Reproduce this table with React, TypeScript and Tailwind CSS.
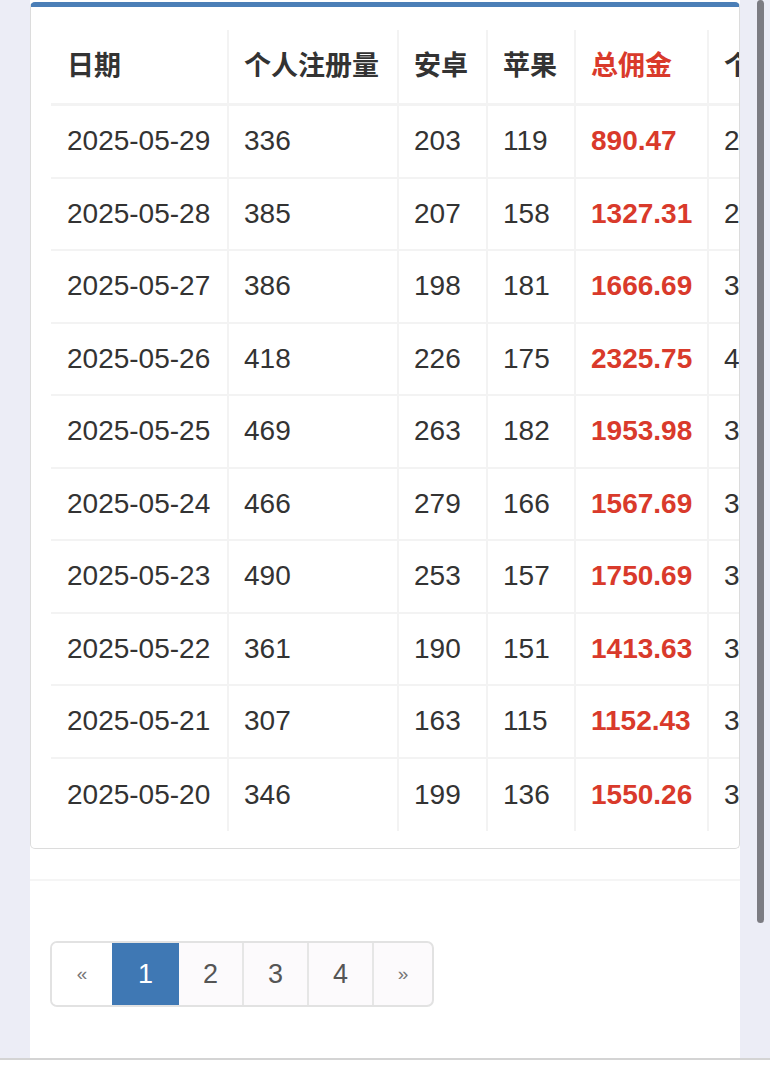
import React from 'react';

const rows = [
  ['2025-05-29', '336', '203', '119', '890.47', '247.30'],
  ['2025-05-28', '385', '207', '158', '1327.31', '286.12'],
  ['2025-05-27', '386', '198', '181', '1666.69', '312.45'],
  ['2025-05-26', '418', '226', '175', '2325.75', '408.60'],
  ['2025-05-25', '469', '263', '182', '1953.98', '351.20'],
  ['2025-05-24', '466', '279', '166', '1567.69', '339.75'],
  ['2025-05-23', '490', '253', '157', '1750.69', '362.10'],
  ['2025-05-22', '361', '190', '151', '1413.63', '318.44'],
  ['2025-05-21', '307', '163', '115', '1152.43', '301.92'],
  ['2025-05-20', '346', '199', '136', '1550.26', '334.08'],
];

const widths = ['w-[176px]', 'w-[170px]', 'w-[89px]', 'w-[88px]', 'w-[133px]', 'w-[140px]'];
const heads = ['日期', '个人注册量', '安卓', '苹果', '总佣金', '个人佣金'];

function Cell({ i, children, red, head }: { i: number; children: React.ReactNode; red?: boolean; head?: boolean }) {
  return (
    <div
      className={`${widths[i]} shrink-0 h-full flex items-center whitespace-nowrap ${
        i === 0 ? 'pl-[16px]' : 'pl-[15px] border-l-2 border-[#f3f3f3]'
      } ${red ? 'text-[#d93a2b] font-bold' : 'text-[#333]'} ${head ? 'font-semibold text-[27px]' : 'text-[28px]'}`}
    >
      {children}
    </div>
  );
}

export default function App() {
  return (
    <div
      className="w-[770px] h-[1080px] bg-[#ecedf6] flex flex-col overflow-hidden"
      style={{ fontFamily: '"Liberation Sans", "Noto Sans CJK SC", sans-serif' }}
    >
      <div className="flex flex-1 min-h-0">
        <div className="w-[30px] shrink-0" />
        <div className="w-[710px] shrink-0 bg-white flex flex-col">
          <div className="mt-[2px] rounded-[5px] border border-[#dcdcdc] border-t-[5px] border-t-[#4b7fb7] pl-[20px] pt-[23px] pb-[17px] overflow-hidden">
            <div className="overflow-hidden">
              <div className="flex h-[76px] border-b-[3px] border-[#f3f3f3] w-max">
                {heads.map((h, i) => (
                  <Cell key={h} i={i} head red={i === 4}>
                    {h}
                  </Cell>
                ))}
              </div>
              {rows.map((r, ri) => (
                <div
                  key={r[0]}
                  className={`flex w-max h-[72.5px] ${ri < rows.length - 1 ? 'border-b-2 border-[#f3f3f3]' : ''}`}
                >
                  {r.map((v, i) => (
                    <Cell key={i} i={i} red={i === 4}>
                      {v}
                    </Cell>
                  ))}
                </div>
              ))}
            </div>
          </div>
          <div className="h-[30px]" />
          <div className="border-t-2 border-[#f5f5f5] pt-[60px] pl-[20px]">
            <div className="inline-flex h-[66px] border-2 border-[#e2e2e2] rounded-[7px] overflow-hidden bg-[#fcfafc] text-[#555]">
              <div className="w-[60px] flex items-center justify-center text-[19px] text-[#777] bg-white">«</div>
              <div className="w-[67px] flex items-center justify-center text-[27px] bg-[#3f78b4] text-white">1</div>
              <div className="w-[63px] flex items-center justify-center text-[27px]">2</div>
              <div className="w-[65px] flex items-center justify-center text-[27px] border-l-2 border-[#e6e6e6]">3</div>
              <div className="w-[65px] flex items-center justify-center text-[27px] border-l-2 border-[#e6e6e6]">4</div>
              <div className="w-[60px] flex items-center justify-center text-[19px] text-[#777] border-l-2 border-[#e6e6e6]">»</div>
            </div>
          </div>
        </div>
        <div className="w-[30px] shrink-0 pl-[17px]">
          <div className="w-[7px] h-[923px] rounded-full bg-[#7c7c82]" />
        </div>
      </div>
      <div className="h-[22px] shrink-0 bg-white border-t-2 border-[#d4d4d4]" />
    </div>
  );
}
